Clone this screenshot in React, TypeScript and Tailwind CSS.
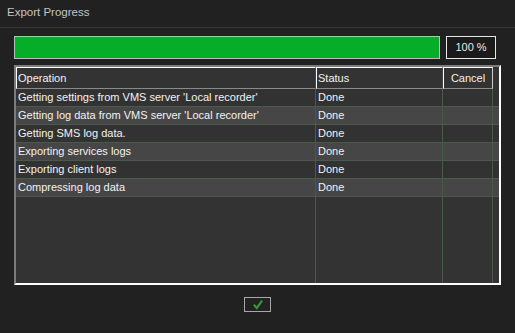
const rows = [
  { op: "Getting settings from VMS server 'Local recorder'", status: "Done" },
  { op: "Getting log data from VMS server 'Local recorder'", status: "Done" },
  { op: "Getting SMS log data.", status: "Done" },
  { op: "Exporting services logs", status: "Done" },
  { op: "Exporting client logs", status: "Done" },
  { op: "Compressing log data", status: "Done" },
];

export default function App() {
  return (
    <div
      className="flex h-[333px] w-[515px] flex-col bg-[#212121] text-[11px] text-[#f2f2f2]"
      style={{ fontFamily: '"Liberation Sans", Arial, sans-serif' }}
    >
      <div className="flex h-[28px] items-center border-b border-[#363636] pl-[7px] pb-[2px] text-[11.5px] text-[#c4c4c4]">
        Export Progress
      </div>

      <div className="flex flex-col px-[14px] pt-[8px]">
        <div className="flex h-[23px] gap-[6px]">
          <div className="w-[426px] border border-[#bcbcbc] bg-[#05ad29]" />
          <div className="flex w-[50px] items-center justify-center border border-[#e6e6e6] bg-[#1b1b1b] text-[#e8e8e8]">
            100 %
          </div>
        </div>

        <div className="mt-[6px] flex h-[220px] flex-col border-2 border-t-[#7c7c7c] border-l-[#7c7c7c] border-r-white border-b-white bg-[#333333]">
          <div className="flex h-[22px] shrink-0">
            <div className="flex w-[300px] items-center border border-l-white border-t-white border-r-[#444] border-b-[#8a8a8a] pl-[1px]">
              Operation
            </div>
            <div className="flex w-[127px] items-center border border-l-white border-t-white border-r-[#444] border-b-[#8a8a8a] pl-[1px]">
              Status
            </div>
            <div className="flex w-[50px] items-center justify-center border border-l-white border-t-white border-r-[#cfcfcf] border-b-[#8a8a8a]">
              Cancel
            </div>
          </div>

          {rows.map((r, i) => (
            <div
              key={i}
              className={`flex h-[18px] shrink-0 border-b border-[#4a5a4a] ${
                i % 2 === 0 ? "bg-[#323232]" : "bg-[#464646]"
              }`}
            >
              <div className="flex w-[300px] items-center border-r border-[#4a5a4a] pl-[2px]">
                {r.op}
              </div>
              <div className="flex w-[127px] items-center border-r border-[#4a5a4a] pl-[2px]">
                {r.status}
              </div>
              <div className="w-[50px] border-r border-[#4a5a4a]" />
            </div>
          ))}

          <div className="flex flex-1">
            <div className="w-[300px] border-r border-[#4a5a4a]" />
            <div className="w-[127px] border-r border-[#4a5a4a]" />
            <div className="w-[50px] border-r border-[#4a5a4a]" />
          </div>
        </div>

        <div className="mt-[12px] flex justify-center">
          <button className="flex h-[15px] w-[27px] items-center justify-center border border-[#a8a8a8] bg-[#222]">
            <svg width="10" height="10" viewBox="0 0 10 10">
              <path
                d="M1.5 5.5 L3.8 8 L8.5 1.5"
                fill="none"
                stroke="#2e9a3b"
                strokeWidth="2.2"
                strokeLinecap="square"
              />
            </svg>
          </button>
        </div>
      </div>
    </div>
  );
}
